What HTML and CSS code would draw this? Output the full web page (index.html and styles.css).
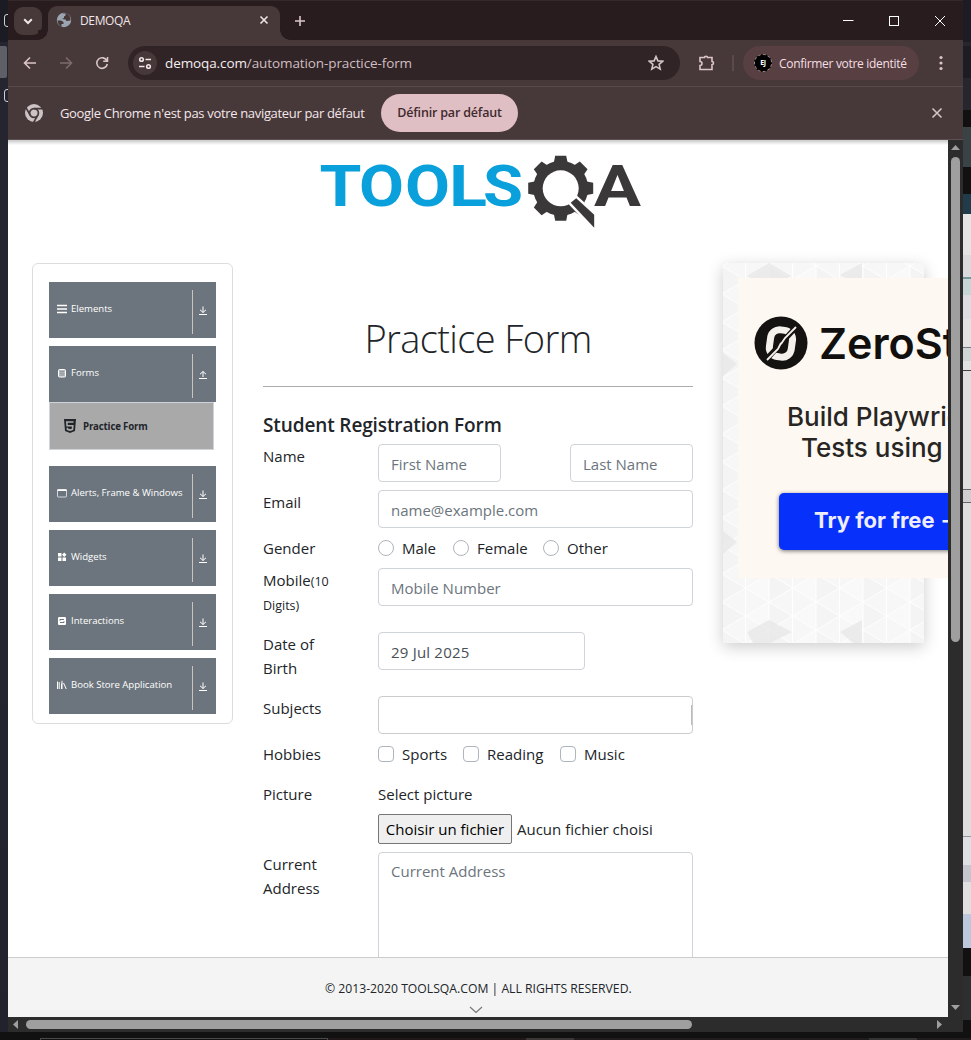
FILE: index.html
```html
<!DOCTYPE html>
<html lang="fr">
<head>
<meta charset="utf-8">
<title>DEMOQA</title>
<link rel="stylesheet" href="styles.css">
</head>
<body>
<div class="desktop">
  <div class="edge-left"><i class="edge-icon first"></i><i class="edge-tab"></i><i class="edge-icon"></i></div>
  <div class="window">
    <header class="tabstrip">
      <div class="tab-search"><svg width="12" height="12" viewBox="0 0 12 12"><path d="M2.200 4.200 6 8l3.800-3.800" class="ln light w2"/></svg></div>
      <div class="tab">
        <svg class="globe" width="16" height="16" viewBox="0 0 16 16"><circle cx="8" cy="8" r="7.200" fill="#9aa5b1"/><path d="M1.500 8.500h3.500l2.500 1.500v2H5.500v2.500C3 13.500 1.500 11 1.500 8.500zM6 1.500 8.500 1l1.500 2-2 1.500V6l-2 1 3.500.5 1 1.500 4-.5C14.800 5 12.500 2 10.500 1.300z" fill="#463739"/></svg>
        <span class="tab-title">DEMOQA</span>
        <svg class="tab-x" width="10" height="10" viewBox="0 0 10 10"><path d="m1.500 1.500 7 7m0-7-7 7" class="ln light"/></svg>
      </div>
      <svg class="plus" width="12" height="12" viewBox="0 0 12 12"><path d="M6 1v10M1 6h10" class="ln pink"/></svg>
      <div class="win-buttons">
        <svg width="12" height="12" viewBox="0 0 12 12"><path d="M1 5.500h10.500" class="ln white thin"/></svg>
        <svg width="12" height="12" viewBox="0 0 12 12"><rect x="1.500" y="1.500" width="9" height="9" class="ln white thin"/></svg>
        <svg width="12" height="12" viewBox="0 0 12 12"><path d="m1 1 10 10m0-10L1 11" class="ln white thin"/></svg>
      </div>
    </header>
    <div class="toolbar">
      <svg class="nav back" width="16" height="16" viewBox="0 0 16 16"><path d="M14 8H2.500M8 2.500 2.500 8 8 13.500" class="ln pink"/></svg>
      <svg class="nav fwd" width="16" height="16" viewBox="0 0 16 16"><path d="M2 8h11.500M8 2.500 13.500 8 8 13.500" class="ln dim"/></svg>
      <svg class="nav reload" width="16" height="16" viewBox="0 0 16 16"><path d="M13 6A5.300 5.300 0 1 0 13.300 9M13.500 2v4.300H9.200" class="ln pink"/></svg>
      <div class="omnibox">
        <span class="site-info"><svg width="16" height="16" viewBox="0 0 16 16"><circle cx="4.500" cy="4.500" r="1.800" class="ln light"/><path d="M8.500 4.500H14M2 11.500h5.500" class="ln light"/><circle cx="11.500" cy="11.500" r="1.800" class="ln light"/></svg></span>
        <span class="url">demoqa.com<em>/automation-practice-form</em></span>
        <svg class="star" width="16" height="16" viewBox="0 0 16 16"><path d="m8 1.500 1.900 4.400 4.800.4-3.600 3.100 1.100 4.700L8 11.600l-4.200 2.500 1.100-4.700-3.600-3.100 4.800-.4z" class="ln soft"/></svg>
      </div>
      <svg class="puzzle" width="20" height="20" viewBox="0 0 20 20"><path d="M3 4.500h4.500a1.500 1.300 0 0 1 3 0h4.500v4a1.500 1.600 0 0 1 0 3.200v4.800H3v-4a2 2 0 0 0 0-4z" class="ln pink"/></svg>
      <i class="sep"></i>
      <div class="profile"><b class="avatar">EJ</b><span>Confirmer votre identité</span></div>
      <svg class="dots" width="4" height="16" viewBox="0 0 4 16"><circle cx="2" cy="2.500" r="1.600"/><circle cx="2" cy="8" r="1.600"/><circle cx="2" cy="13.500" r="1.600"/></svg>
    </div>
    <div class="infobar">
      <svg class="chrome" width="18" height="18" viewBox="0 0 18 18"><circle cx="9" cy="9" r="9" fill="#cbc3c4"/><circle cx="9" cy="9" r="4.400" class="ring"/><path d="M9 4.600h8M5.200 11.200l-4-7M12.800 11.200l-4 7" class="ring"/></svg>
      <span class="info-text">Google Chrome n'est pas votre navigateur par défaut</span>
      <span class="info-button">Définir par défaut</span>
      <svg class="info-x" width="12" height="12" viewBox="0 0 12 12"><path d="m1.500 1.500 9 9m0-9-9 9" class="ln soft"/></svg>
    </div>
    <div class="view">
      <main class="page">
        <div class="brand">
          <svg width="340" height="95" viewBox="0 0 340 95">
            <g class="logo-tools">
              <text x="9.500" y="61" textLength="42" lengthAdjust="spacingAndGlyphs">T</text>
              <text x="49" y="61" textLength="45" lengthAdjust="spacingAndGlyphs">O</text>
              <text x="95" y="61" textLength="45" lengthAdjust="spacingAndGlyphs">O</text>
              <text x="139" y="61" textLength="38" lengthAdjust="spacingAndGlyphs">L</text>
              <text x="173" y="61" textLength="40" lengthAdjust="spacingAndGlyphs">S</text>
            </g>
            <text x="284" y="61" class="logo-a" textLength="47" lengthAdjust="spacingAndGlyphs">A</text>
            <g transform="translate(250.700 43.300)" fill="#3a3839">
              <g id="t"><path d="M-7-25-5.500-32.500h11L7-25V25L5.500 32.500h-11L-7 25z"/></g>
              <use href="#t" transform="rotate(45)"/><use href="#t" transform="rotate(90)"/><use href="#t" transform="rotate(135)"/>
              <circle r="27.500"/><circle r="18" fill="#fff"/>
              <path d="m10 14.500 5.500-4.500 18 16.500v13z" stroke="#fff" stroke-width="5"/>
              <path d="m10 14.500 5.500-4.500 18 16.500v13z"/>
            </g>
          </svg>
        </div>
        <div class="columns">
          <aside class="menu">
            <div class="item"><svg class="mi" width="10" height="10" viewBox="0 0 10 10"><path d="M0 1.500h10M0 5h10M0 8.500h10" class="ln white"/></svg><span>Elements</span><i class="toggle"><svg width="10" height="10" viewBox="0 0 10 10"><path d="M5 .5v6M2 3.800l3 2.700 3-2.700M1 8.500h8" class="ln white thin"/></svg></i></div>
            <div class="item open"><svg class="mi" width="10" height="10" viewBox="0 0 10 10"><rect x="1.500" y="1.500" width="7" height="7.500" rx="1" fill="#b5babe" stroke="#fff"/><path d="M3 3.500h4M3 5.200h4M3 7h4" stroke="#858d94" stroke-width=".7"/></svg><span>Forms</span><i class="toggle"><svg width="10" height="10" viewBox="0 0 10 10"><path d="M5 7V1.500M2 4.200l3-2.700 3 2.700M1 8.500h8" class="ln white thin"/></svg></i></div>
            <div class="sub"><svg width="12" height="14" viewBox="0 0 12 14"><path d="M0 0h12l-1 12-5 2-5-2z" fill="#212529"/><path d="M9.500 3H2.800l.3 3.700h5.700l-.3 3.600-2.500.8-2.500-.8-.1-1.500" class="ln grey"/></svg><span>Practice Form</span></div>
            <div class="item"><svg class="mi" width="10" height="10" viewBox="0 0 10 10"><rect x=".5" y="1.500" width="9" height="7.500" rx=".8" class="ln white thin faded"/><path d="M.5 2.200h9" class="ln white"/></svg><span>Alerts, Frame &amp; Windows</span><i class="toggle"><svg width="10" height="10" viewBox="0 0 10 10"><path d="M5 .5v6M2 3.800l3 2.700 3-2.700M1 8.500h8" class="ln white thin"/></svg></i></div>
            <div class="item"><svg class="mi" width="10" height="10" viewBox="0 0 10 10"><path d="M1 1h3.500v3.500H1zM7.200.5 9.500 2.800 7.200 5 5 2.800zM1 5.500h3.500V9H1zM5.500 5.500H9V9H5.500z" fill="#fff"/></svg><span>Widgets</span><i class="toggle"><svg width="10" height="10" viewBox="0 0 10 10"><path d="M5 .5v6M2 3.800l3 2.700 3-2.700M1 8.500h8" class="ln white thin"/></svg></i></div>
            <div class="item"><svg class="mi" width="10" height="10" viewBox="0 0 10 10"><rect x="1" y="1" width="8" height="8" rx="1" fill="#fff"/><path d="M3 4.800V3.500h4M3 6.500h4V5.200" stroke="#6c757d" fill="none"/></svg><span>Interactions</span><i class="toggle"><svg width="10" height="10" viewBox="0 0 10 10"><path d="M5 .5v6M2 3.800l3 2.700 3-2.700M1 8.500h8" class="ln white thin"/></svg></i></div>
            <div class="item"><svg class="mi" width="10" height="10" viewBox="0 0 10 10"><path d="M.5 1.500V9M2.200 2v7M4.500 3.500V9M5 .8V9M6.500 3l2.800 6" class="ln white thin"/></svg><span>Book Store Application</span><i class="toggle"><svg width="10" height="10" viewBox="0 0 10 10"><path d="M5 .5v6M2 3.800l3 2.700 3-2.700M1 8.500h8" class="ln white thin"/></svg></i></div>
          </aside>
          <section class="content">
            <h1>Practice Form</h1>
            <h5>Student Registration Form</h5>
            <div class="row g8"><label>Name</label><div class="names"><input class="field half" placeholder="First Name"><input class="field half" placeholder="Last Name"></div></div>
            <div class="row g8"><label>Email</label><input class="field" placeholder="name@example.com"></div>
            <div class="row g8"><label>Gender</label><div class="choices"><span class="choice male"><i class="radio"></i>Male</span><span class="choice female"><i class="radio"></i>Female</span><span class="choice"><i class="radio"></i>Other</span></div></div>
            <div class="row g16 two"><label>Mobile<small>(10 Digits)</small></label><input class="field" placeholder="Mobile Number"></div>
            <div class="row g16 two"><label>Date of<br>Birth</label><input class="field date" value="29 Jul 2025"></div>
            <div class="row g8"><label>Subjects</label><div class="field subjects"><i></i></div></div>
            <div class="row g16 hobbies"><label>Hobbies</label><div class="choices"><span class="choice sports"><i class="check"></i>Sports</span><span class="choice reading"><i class="check"></i>Reading</span><span class="choice"><i class="check"></i>Music</span></div></div>
            <div class="row g8"><label>Picture</label><div class="picture"><span>Select picture</span><div class="file"><span class="file-button">Choisir un fichier</span><span class="file-name">Aucun fichier choisi</span></div></div></div>
            <div class="row"><label>Current<br>Address</label><textarea class="field area" placeholder="Current Address"></textarea></div>
          </section>
          <aside class="promo">
            <svg class="pattern" width="201" height="380">
              <defs><pattern id="tri" width="47" height="28" patternUnits="userSpaceOnUse" patternTransform="translate(-1 3)"><rect width="47" height="28" fill="#f7f7f7"/><path d="M0 0 23.500 14 0 28z" fill="#f4f4f4"/><path d="M47 0 23.500 14 47 28z" fill="#f9f9f9"/><path d="M0 0 47 28M47 0 0 28M23.500 0v28M0 0v28M47 0v28" stroke="#fff" stroke-width="1"/></pattern></defs>
              <rect width="201" height="380" fill="url(#tri)"/>
              <path d="m24 369 22-12 23 12-22 11H30zM117 369l22-12v23h-9zM0 90l14 11-14 12zM0 268l14 11-14 12zM24 13 46 0l22 13-10 6H34zM117 12l22-12v16h-16z" fill="#e6e6e6" opacity=".7"/>
            </svg>
            <div class="ad">
              <div class="ad-brand"><svg width="54" height="54" viewBox="0 0 54 54"><circle cx="27" cy="27" r="26.500" fill="#141311"/><rect x="16" y="14" width="22" height="27" rx="9" fill="none" stroke="#f4f1ec" stroke-width="7" transform="rotate(8 27 27)"/><path d="M10 46 44 9" stroke="#141311" stroke-width="5.500"/><path d="m13 44 11-11 3-6M42 11 31 22l-4 6" class="slash"/></svg><span>ZeroStep</span></div>
              <p class="line-a">Build Playwright</p>
              <p class="line-b">Tests using AI</p>
              <div class="cta">Try for free →</div>
            </div>
          </aside>
        </div>
      </main>
      <footer class="foot"><span>© 2013-2020 TOOLSQA.COM | ALL RIGHTS RESERVED.</span><svg width="14" height="8" viewBox="0 0 14 8"><path d="m1 1 6 5.500L13 1" stroke="#777" stroke-width="1.200" fill="none"/></svg></footer>
      <div class="vbar"><svg width="9" height="5"><path d="M4.500 0 9 5H0z" fill="#9f9f9f"/></svg><i></i><svg class="down" width="9" height="5"><path d="M0 0h9L4.500 5z" fill="#9f9f9f"/></svg></div>
      <div class="hbar"><svg width="5" height="9"><path d="M5 0v9L0 4.500z" fill="#9f9f9f"/></svg><i></i><svg class="right" width="5" height="9"><path d="M0 0v9l5-4.500z" fill="#9f9f9f"/></svg></div>
      <div class="corner"></div>
    </div>
  </div>
  <div class="edge-right"></div>
  <div class="edge-bottom"><i></i><b></b></div>
</div>
</body>
</html>
```

FILE: styles.css
```css
* { box-sizing: border-box; }
body { margin: 0; width: 971px; height: 1040px; overflow: hidden; font-family: "Open Sans", "Noto Sans", sans-serif; color: #212529; background: #111; }
svg { display: block; flex: none; }
i, em { font-style: normal; }
.ln { fill: none; stroke-width: 1.6; }
.w2 { stroke-width: 2; }
.thin { stroke-width: 1; }
.faded { opacity: .7; }
.light { stroke: #efe6e7; }
.soft { stroke: #d2c6c8; }
.white { stroke: #fff; }
.pink { stroke: #dcc5c8; }
.dim { stroke: #7d6b6e; }
.grey { stroke: #aaa; }
.slash { fill: none; stroke: #f4f1ec; stroke-width: 1.8; }
.desktop { display: grid; grid-template-columns: 8px 955px 8px; grid-template-rows: 1032px 8px; }

.edge-left { background: linear-gradient(#1b1b23 0 42px, #252530 42px 600px, #22222c); display: flex; flex-direction: column; overflow: hidden; }
.edge-icon { flex: none; margin-left: 4px; width: 8px; height: 13px; border: 1px solid #d0d0d4; border-radius: 3px; }
.first { margin-top: 14px; }
.edge-tab { flex: none; height: 32px; width: 7px; margin: 19px 0 11px; background: #5f6067; border-radius: 0 2px 2px 0; }
.edge-right { background: linear-gradient(#1d1c24 0 42px, #27262e 42px 46px, #1d1c24 46px 78px, #27262e 78px 110px, #111 110px 127px, #394245 127px 167px, #111 167px 194px, #203b49 194px 214px, #e4e4e4 214px 255px, #dadadd 255px 277px, #78999b 277px 279px, #c6d6d5 279px 295px, #dcdce1 295px 319px, #e2e2e2 319px 347px, #778 347px 348px, #d0d5d6 348px 361px, #e2e2e2 361px 370px, #444 370px 371px, #dfdfdf 371px 489px, #666 489px 490px, #cfcfd2 490px 502px, #666 502px 503px, #dedede 503px 836px, #999 836px 837px, #dfe0e4 837px 865px, #c6c6ce 865px 882px, #e0e0e0 882px 914px, #bcc8dc 914px 948px, #111 948px 976px, #2c2e30 976px 1020px, #111 1020px); }
.edge-bottom { grid-column: 1 / -1; background: #111; display: flex; align-items: flex-end; }
.edge-bottom i { margin-left: 40px; width: 288px; height: 2px; border: 1px solid #4a4a4a; border-bottom: 0; }
.edge-bottom b { flex: 1; height: 2px; background: linear-gradient(90deg, #201719 0 198px, #3a3636 198px 246px, #201b1c 246px 541px, #333 541px 589px, #201b1c 589px); }

.window { height: 1032px; background: #47383a; }
.tabstrip { height: 40px; background: #281c1e; display: flex; align-items: center; border-top: 1px solid #33292a; }
.tab-search { width: 28px; height: 28px; margin-left: 6px; border-radius: 9px; background: #47383a; display: flex; align-items: center; justify-content: center; }
.tab { position: relative; align-self: flex-end; display: flex; align-items: center; width: 232px; height: 34px; margin-left: 6px; padding: 0 11px 6px 8px; border-radius: 9px 9px 0 0; background: #47383a; }
.tab::after { content: ""; position: absolute; left: 232px; bottom: 0; width: 10px; height: 10px; background: radial-gradient(circle at 100% 0, #281c1e 9.500px, #47383a 10px); }
.tab::before { content: ""; position: absolute; left: -10px; bottom: 0; width: 10px; height: 10px; background: radial-gradient(circle at 0 0, #281c1e 9.500px, #47383a 10px); }
.tab-title { margin-left: 8px; font-size: 12px; letter-spacing: -.35px; color: #f1e6e8; }
.tab-x { margin-left: auto; }
.plus { margin-left: 14px; }
.win-buttons { margin-left: auto; padding-right: 17px; display: flex; gap: 34px; }
.toolbar { height: 46px; display: flex; align-items: center; }
.back { margin-left: 14px; }
.fwd { margin-left: 20px; }
.reload { margin-left: 20px; }
.omnibox { margin-left: 18px; width: 552px; height: 34px; border-radius: 17px; background: #302426; display: flex; align-items: center; padding: 0 16px 0 5px; }
.site-info { width: 24px; height: 24px; border-radius: 12px; background: #47383a; display: flex; align-items: center; justify-content: center; }
.url { margin-left: 8px; font-size: 13.500px; letter-spacing: -.1px; color: #f6edef; }
.url em { color: #cfbec1; }
.star { margin-left: auto; }
.puzzle { margin-left: 17px; }
.sep { width: 2px; height: 16px; margin-left: 15px; background: #5b494c; }
.profile { margin-left: 9px; width: 176px; height: 34px; border-radius: 17px; background: #573f42; display: flex; align-items: center; padding-left: 11px; gap: 7px; font-size: 12px; color: #f6dfe2; letter-spacing: -.31px; white-space: nowrap; }
.avatar { width: 18px; height: 18px; border-radius: 9px; border: 1px dashed #a58c8f; background: #000; color: #fff; font-size: 7px; line-height: 16px; text-align: center; }
.dots { margin-left: 20px; fill: #dcc5c8; }
.infobar { height: 54px; border-top: 1px solid #564a4b; border-bottom: 1px solid #5c5052; display: flex; align-items: center; padding: 0 20px 0 17px; }
.ring { fill: none; stroke: #47383a; stroke-width: 1.700; }
.info-text { margin-left: 17px; width: 305px; font-size: 13px; letter-spacing: -.33px; color: #f4e7e9; white-space: nowrap; }
.info-button { margin-left: 16px; width: 137px; height: 38px; border-radius: 19px; background: #e0bfc4; color: #3f2a2e; font-size: 12.500px; font-weight: 600; letter-spacing: -.18px; line-height: 38px; text-align: center; }
.info-x { margin-left: auto; }

.view { display: grid; grid-template-columns: 940px 15px; grid-template-rows: 817px 60px 15px; }
.page { background: #fff linear-gradient(#c8c8c8, #fff) 0 0 / 100% 5px no-repeat; overflow: hidden; }
.brand { padding: 5px 0 0 302px; height: 123px; }
.logo-tools { font: 700 57px Roboto, sans-serif; fill: #0aa0dc; }
.logo-a { font: 700 57px Roboto, sans-serif; fill: #3a3839; }
.columns { display: grid; grid-template-columns: 201px 430px 225px; column-gap: 30px; padding-left: 24px; align-items: start; }
.menu { height: 461px; border: 1px solid #dcdcdc; border-radius: 6px; padding: 18px 16px; display: flex; flex-direction: column; }
.item { height: 56px; flex: none; margin-bottom: 8px; background: #6c757d; color: #fff; display: flex; padding-left: 8px; font-size: 9.600px; font-weight: 500; letter-spacing: -.02px; white-space: nowrap; }
.item.open { margin-bottom: 0; }
.mi { margin-top: 22px; }
.item span { margin: 20px 0 0 4px; line-height: 14px; }
.toggle { margin: 8px 0 4px auto; width: 24px; border-left: 1px solid #c9c4bc; padding: 16px 0 0 5px; }
.sub { flex: none; height: 48px; width: 165px; margin-bottom: 16px; border: 1px solid #ced4da; background: #a9a9a9; display: flex; align-items: center; padding-left: 14px; gap: 7px; font-size: 9.700px; font-weight: 700; letter-spacing: -.18px; }

.content h1 { margin: 0; height: 124px; padding-top: 48px; font-size: 38px; line-height: 54px; font-weight: 300; text-align: center; border-bottom: 1px solid #a9abad; letter-spacing: -.6px; }
.content h5 { margin: 26px 0 7px; font-size: 19px; line-height: 24px; font-weight: 600; letter-spacing: -.12px; white-space: nowrap; }
.row { display: grid; grid-template-columns: 115px 315px; font-size: 15px; line-height: 24px; }
.g8 { margin-bottom: 8px; }
.g16 { margin-bottom: 16px; }
.two { height: 48px; }
.hobbies { height: 24px; }
.row label { width: 75px; }
.row small { font-size: 12.500px; line-height: 20px; }
.names { display: flex; justify-content: space-between; }
.field { display: block; width: 315px; height: 38px; border: 1px solid #ced4da; border-radius: 4px; padding: 1px 12px 0; font: 15px "Open Sans", "Noto Sans", sans-serif; color: #495057; background: #fff; outline: 0; }
.field::placeholder { color: #6c757d; opacity: 1; }
.half { width: 123px; }
.date { width: 207px; letter-spacing: .2px; }
.area { height: 160px; resize: none; padding-top: 8px; }
.subjects { border-color: #ccc; padding: 8px 0 0; display: flex; justify-content: flex-end; }
.subjects i { width: 1px; height: 20px; background: #bbb; }
.choices { display: flex; }
.choice { display: flex; align-items: center; gap: 8px; white-space: nowrap; }
.male { width: 75px; }
.female { width: 90px; }
.sports { width: 85px; }
.reading { width: 97px; }
.radio, .check { width: 16px; height: 16px; border: 1px solid #adb5bd; border-radius: 8px; }
.check { border-radius: 4px; }
.picture > span { display: block; margin-bottom: 8px; }
.file { display: flex; height: 30px; line-height: 28px; white-space: nowrap; }
.file-button { width: 134px; border: 1px solid #767676; border-radius: 2px; background: #efefef; color: #000; text-align: center; }
.file-name { margin-left: 5px; line-height: 30px; }

.promo { width: 201px; height: 380px; box-shadow: 0 4px 15px #0003; display: grid; }
.promo > * { grid-area: 1 / 1; }
.ad { margin: 15px 0 0 15px; width: 300px; height: 300px; background: #fdf8f1; padding-top: 38px; font-family: Inter, sans-serif; color: #282624; white-space: nowrap; }
.ad-brand { display: flex; align-items: center; gap: 11px; padding-left: 16px; font-size: 43px; font-weight: 600; line-height: 54px; color: #11100f; }
.ad p { margin: 0; font-size: 26px; line-height: 31px; font-weight: 500; }
.ad .line-a { margin: 31px 0 0 49px; }
.ad .line-b { margin-left: 63px; }
.cta { margin: 30px 0 0 41px; width: 220px; height: 57px; border-radius: 5px; background: #0730fb; box-shadow: 0 1px 4px #0008; color: #eef; font-size: 22px; font-weight: 700; line-height: 54px; padding-left: 35px; }

.foot { grid-row: 2; grid-column: 1; background: #f4f4f4; border-top: 1px solid #ccc; display: flex; flex-direction: column; align-items: center; padding-top: 21px; font-size: 12.200px; line-height: 20px; letter-spacing: 0; }
.foot svg { margin: 7px 4px 0 0; }
.foot span { width: 306px; white-space: nowrap; }
.vbar { grid-column: 2; grid-row: 1 / 3; background: #2c2c2c; display: flex; flex-direction: column; align-items: center; padding: 5px 0 7px; }
.vbar i { width: 9px; height: 485px; margin-top: 7px; border-radius: 5px; background: #9f9f9f; }
.down { margin-top: auto; }
.hbar { grid-column: 1; grid-row: 3; background: #2c2c2c; display: flex; align-items: center; padding: 0 6px 0 5px; }
.hbar i { width: 666px; height: 9px; margin-left: 8px; border-radius: 5px; background: #9f9f9f; }
.right { margin-left: auto; }
.corner { background: #2c2c2c; }
```
